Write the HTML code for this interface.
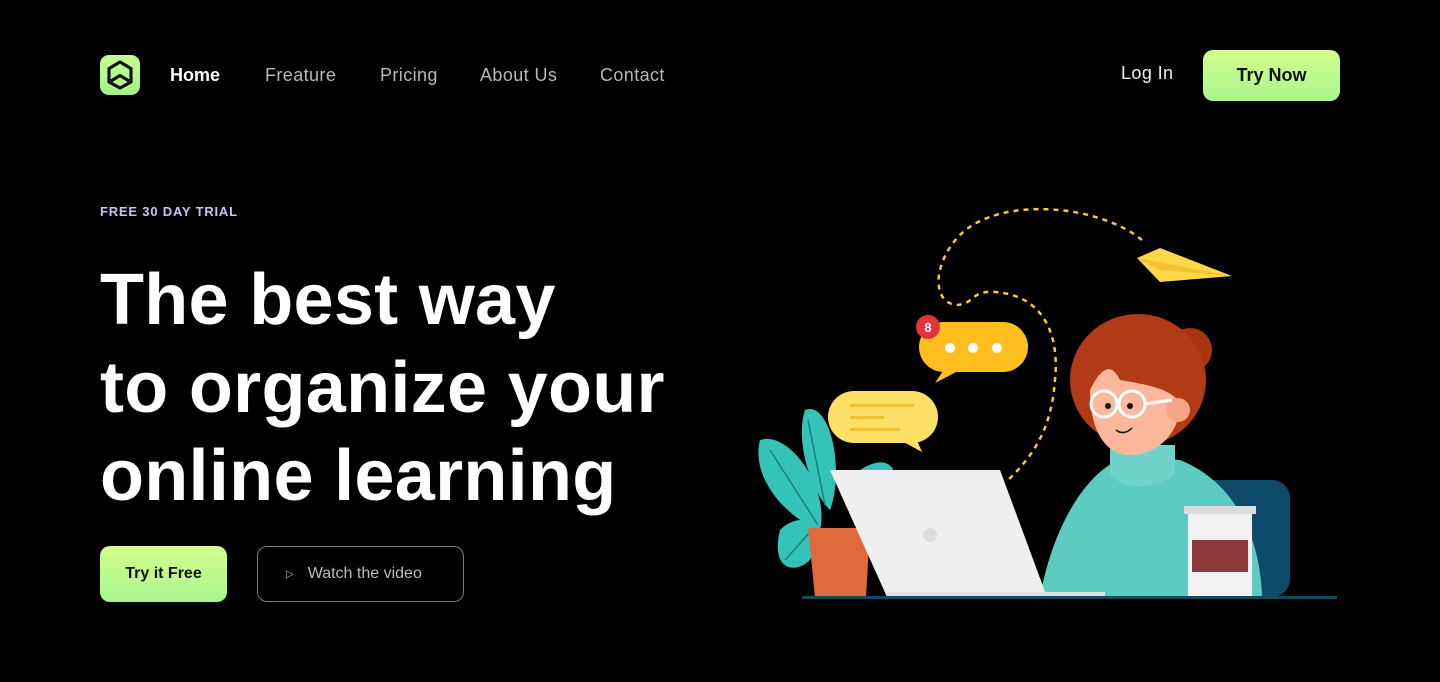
<!DOCTYPE html>
<html><head><style>
*{margin:0;padding:0;box-sizing:border-box}
body{width:1440px;height:682px;background:#000;font-family:"Liberation Sans",sans-serif;color:#fff;position:relative;overflow:hidden}
.a{position:absolute;white-space:nowrap}
.nav{font-size:18px;color:#b8b8b8;top:65px;letter-spacing:0.4px}
.btn{background:linear-gradient(180deg,#d4ff8c,#a9f58e);color:#111;font-weight:bold;border-radius:10px;display:flex;align-items:center;justify-content:center}
h1{position:absolute;left:100px;top:256px;font-size:72px;line-height:88px;font-weight:bold;letter-spacing:0.3px}
</style></head><body>
<div class="a" style="left:100px;top:55px;width:40px;height:40px;border-radius:9px;background:linear-gradient(180deg,#c6ff8e,#a3f28a)">
<svg width="40" height="40" viewBox="0 0 40 40"><path d="M20 7 L31 13.5 V27 L20 33 L9 27 V13.5 Z" fill="none" stroke="#111" stroke-width="3.2" stroke-linejoin="round"/><path d="M11 26 L20 20.5 L29 26" fill="none" stroke="#111" stroke-width="3.2" stroke-linejoin="round"/></svg></div>
<div class="a nav" style="left:170px;color:#fff;font-weight:bold;letter-spacing:0">Home</div>
<div class="a nav" style="left:265px">Freature</div>
<div class="a nav" style="left:380px">Pricing</div>
<div class="a nav" style="left:480px">About Us</div>
<div class="a nav" style="left:600px">Contact</div>
<div class="a nav" style="left:1121px;top:63px;color:#eee">Log In</div>
<div class="a btn" style="left:1203px;top:50px;width:137px;height:51px;font-size:18px">Try Now</div>
<div class="a" style="left:100px;top:204px;font-size:13px;font-weight:bold;color:#c4c6f5;letter-spacing:0.8px">FREE 30 DAY TRIAL</div>
<h1>The best way<br>to organize your<br>online learning</h1>
<div class="a btn" style="left:100px;top:546px;width:127px;height:56px;font-size:16px">Try it Free</div>
<div class="a" style="left:257px;top:546px;width:207px;height:56px;border:1px solid #777;border-radius:10px;color:#bbb;font-size:16px;display:flex;align-items:center;padding-left:28px"><span style="font-size:10px;margin-right:14px">▷</span>Watch the video</div>
<svg class="a" style="left:0;top:0" width="1440" height="682">
<path d="M1142 240 C1100 205 1000 195 960 235 C935 260 930 300 955 305 C975 305 970 290 995 292 C1040 295 1060 330 1055 380 C1052 420 1040 450 1008 480" fill="none" stroke="#f5c93a" stroke-width="2.5" stroke-dasharray="5 5"/>
<polygon points="1137,258 1160,248 1232,276 1160,282" fill="#ffd84a"/><polygon points="1137,258 1232,276 1160,270" fill="#f5c130"/>
<rect x="1190" y="480" width="100" height="117" rx="18" fill="#0e4b6a"/>
<path d="M1040 597 C1050 540 1080 470 1130 455 L1180 460 C1230 480 1260 530 1262 597 Z" fill="#5ccbc0"/>
<path d="M1110 445 L1175 445 L1175 475 C1150 490 1125 490 1110 475Z" fill="#6fd3c9"/>
<circle cx="1190" cy="350" r="22" fill="#a8350f"/>
<ellipse cx="1138" cy="380" rx="68" ry="66" fill="#b23a17"/>
<path d="M1090 390 C1100 370 1110 360 1120 380 C1150 385 1175 390 1180 405 C1180 430 1160 455 1130 455 C1105 455 1090 430 1090 390Z" fill="#fbb89a"/>
<circle cx="1178" cy="410" r="12" fill="#f4a585"/>
<circle cx="1104" cy="404" r="13" fill="none" stroke="#fff" stroke-width="3"/><circle cx="1132" cy="404" r="13" fill="none" stroke="#fff" stroke-width="3"/>
<line x1="1145" y1="404" x2="1172" y2="400" stroke="#fff" stroke-width="3"/>
<circle cx="1108" cy="406" r="3" fill="#111"/><circle cx="1130" cy="406" r="3" fill="#111"/>
<path d="M1116 430 Q1124 436 1132 428" fill="none" stroke="#111" stroke-width="1.5"/>
<path d="M760 440 C790 430 830 490 820 530 C790 520 750 480 760 440Z" fill="#35c2b8"/>
<path d="M805 410 C830 400 845 470 830 510 C810 490 795 440 805 410Z" fill="#35c2b8"/>
<path d="M780 530 C800 510 830 520 810 560 C795 575 770 570 780 530Z" fill="#35c2b8"/>
<path d="M860 470 C890 450 910 470 880 520 Z" fill="#35c2b8"/>
<path d="M770 450 L818 525 M808 420 L825 505 M785 560 L812 530" stroke="#1e7f7a" stroke-width="1.5" fill="none"/>
<path d="M808 528 L870 528 L866 597 L815 597Z" fill="#e06a3e"/>
<polygon points="830,470 1000,470 1047,597 887,597" fill="#efefef"/>
<rect x="887" y="592" width="218" height="6" fill="#e0e0e0"/>
<circle cx="930" cy="535" r="7" fill="#ddd"/>
<rect x="1188" y="508" width="64" height="89" fill="#f2f2f2"/><rect x="1184" y="506" width="72" height="8" fill="#ddd"/>
<rect x="1192" y="540" width="56" height="32" fill="#8e3a3a"/>
<rect x="802" y="596" width="535" height="3" fill="#16485e"/>
<rect x="828" y="391" width="110" height="52" rx="26" fill="#ffe066"/><polygon points="900,440 922,452 915,436" fill="#ffe066"/>
<rect x="850" y="404" width="64" height="3" fill="#f2c12e"/><rect x="850" y="416" width="34" height="3" fill="#f2c12e"/><rect x="850" y="428" width="50" height="3" fill="#f2c12e"/>
<rect x="919" y="322" width="109" height="50" rx="25" fill="#ffbf1f"/><polygon points="935,383 945,368 960,370" fill="#ffbf1f"/>
<circle cx="950" cy="348" r="5" fill="#fff"/><circle cx="973" cy="348" r="5" fill="#fff"/><circle cx="997" cy="348" r="5" fill="#fff"/>
<circle cx="928" cy="327" r="12" fill="#e5333a"/><text x="928" y="332" fill="#fff" font-size="13" font-weight="bold" text-anchor="middle" font-family="Liberation Sans">8</text>
</svg>
</body></html>
